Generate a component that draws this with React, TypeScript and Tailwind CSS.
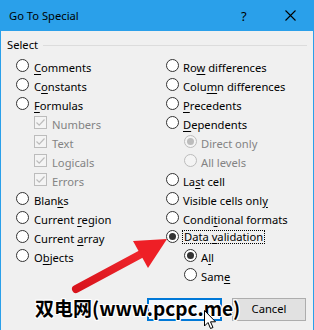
import React from "react";

const FONT = { fontFamily: '"Noto Sans", "Segoe UI", sans-serif' };

function Radio({ checked, disabled }: { checked?: boolean; disabled?: boolean }) {
  return (
    <span
      className={`w-[13px] h-[13px] shrink-0 rounded-full border flex items-center justify-center ${
        disabled ? "border-[#bcbcbc] bg-[#f4f4f4]" : "border-[#333333] bg-white"
      }`}
    >
      {checked && (
        <span className={`w-[7px] h-[7px] rounded-full ${disabled ? "bg-[#bcbcbc]" : "bg-[#333333]"}`} />
      )}
    </span>
  );
}

function Check() {
  return (
    <span className="w-[13px] h-[13px] shrink-0 border border-[#bcbcbc] bg-[#f4f4f4] flex items-center justify-center">
      <svg width="11" height="11" viewBox="0 0 11 11">
        <path d="M1.5 5.5 L4.2 8.2 L9.5 2.5" fill="none" stroke="#bcbcbc" strokeWidth="1.2" />
      </svg>
    </span>
  );
}

function Label({ pre = "", u = "", post = "", disabled }: { pre?: string; u?: string; post?: string; disabled?: boolean }) {
  return (
    <span className={`whitespace-nowrap text-[11.2px] leading-[16px] ${disabled ? "text-[#838383]" : "text-black"}`}>
      {pre}
      {u && <span className="underline underline-offset-2">{u}</span>}
      {post}
    </span>
  );
}

function Row({ children, indent = "" }: { children: React.ReactNode; indent?: string }) {
  return <div className={`h-[19px] flex items-center ${indent}`}>{children}</div>;
}

export default function App() {
  return (
    <div className="w-[314px] h-[330px] overflow-hidden relative bg-[#f0f0f0] border-l border-r border-[#2aa0ea]" style={FONT}>
      {/* Title bar */}
      <div className="h-[31px] bg-[#2aa0ea] flex items-center relative">
        <span className="ml-[8px] mt-[1px] text-[11.2px] text-black">Go To Special</span>
        <span className="absolute left-[240px] top-[7px] text-[13px] text-black">?</span>
        <svg className="absolute left-[284px] top-[10px]" width="11" height="11" viewBox="0 0 11 11">
          <path d="M0.5 0.5 L10.5 10.5 M10.5 0.5 L0.5 10.5" stroke="#000" strokeWidth="1.1" />
        </svg>
      </div>

      {/* Group header */}
      <div className="mt-[6px] h-[16px] flex items-center">
        <span className="ml-[6px] text-[11.2px] leading-[16px] text-black">Select</span>
        <span className="flex-1 ml-[5px] mr-[6px] h-px bg-[#dcdcdc]" />
      </div>

      {/* Options */}
      <div className="mt-[3px] flex items-start">
        <div className="w-[150px] ml-[15px] flex flex-col">
          <Row><Radio /><span className="ml-[5px]"><Label u="C" post="omments" /></span></Row>
          <Row><Radio /><span className="ml-[5px]"><Label pre="C" u="o" post="nstants" /></span></Row>
          <Row><Radio /><span className="ml-[5px]"><Label u="F" post="ormulas" /></span></Row>
          <Row indent="pl-[18px]"><Check /><span className="ml-[5px]"><Label pre="Numbers" disabled /></span></Row>
          <Row indent="pl-[18px]"><Check /><span className="ml-[5px]"><Label pre="Text" disabled /></span></Row>
          <Row indent="pl-[18px]"><Check /><span className="ml-[5px]"><Label pre="Logicals" disabled /></span></Row>
          <Row indent="pl-[18px]"><Check /><span className="ml-[5px]"><Label pre="Errors" disabled /></span></Row>
          <Row><Radio /><span className="ml-[5px]"><Label pre="Blan" u="k" post="s" /></span></Row>
          <Row><Radio /><span className="ml-[5px]"><Label pre="Current " u="r" post="egion" /></span></Row>
          <Row><Radio /><span className="ml-[5px]"><Label pre="Current " u="a" post="rray" /></span></Row>
          <Row><Radio /><span className="ml-[5px]"><Label pre="O" u="b" post="jects" /></span></Row>
        </div>
        <div className="flex flex-col">
          <Row><Radio /><span className="ml-[4px]"><Label pre="Ro" u="w" post=" differences" /></span></Row>
          <Row><Radio /><span className="ml-[4px]"><Label pre="Colu" u="m" post="n differences" /></span></Row>
          <Row><Radio /><span className="ml-[4px]"><Label u="P" post="recedents" /></span></Row>
          <Row><Radio /><span className="ml-[4px]"><Label u="D" post="ependents" /></span></Row>
          <Row indent="pl-[18px]"><Radio checked disabled /><span className="ml-[4px]"><Label pre="Direct only" disabled /></span></Row>
          <Row indent="pl-[18px]"><Radio disabled /><span className="ml-[4px]"><Label pre="All levels" disabled /></span></Row>
          <Row><Radio /><span className="ml-[4px]"><Label pre="La" u="s" post="t cell" /></span></Row>
          <Row><Radio /><span className="ml-[4px]"><Label pre="Visible cells onl" u="y" /></span></Row>
          <Row><Radio /><span className="ml-[4px]"><Label pre="Condi" u="t" post="ional formats" /></span></Row>
          <Row>
            <Radio checked />
            <span className="ml-[3px] px-[1px] border border-dotted border-black h-[14px] flex items-center">
              <Label pre="Data " u="v" post="alidation" />
            </span>
          </Row>
          <Row indent="pl-[18px]"><Radio checked /><span className="ml-[4px]"><Label pre="A" u="l" post="l" /></span></Row>
          <Row indent="pl-[18px]"><Radio /><span className="ml-[4px]"><Label pre="Sam" u="e" /></span></Row>
        </div>
      </div>

      {/* Buttons */}
      <div className="mt-[14px] flex justify-end gap-[10px] pr-[7px]">
        <div className="w-[75px] h-[23px] border-2 border-[#0078d7] bg-[#f4f9fd]" />
        <div className="w-[74px] h-[23px] border border-[#adadad] bg-[#e1e1e1] flex items-center justify-center text-[11.2px] text-black">
          Cancel
        </div>
      </div>

      {/* Red arrow annotation */}
      <svg className="absolute left-0 top-0 pointer-events-none" width="314" height="330" viewBox="0 0 314 330">
        <defs>
          <linearGradient id="ar" x1="0" y1="1" x2="1" y2="0">
            <stop offset="0" stopColor="#d8141c" />
            <stop offset="1" stopColor="#f0262c" />
          </linearGradient>
        </defs>
        <line x1="75" y1="289" x2="142" y2="253" stroke="url(#ar)" strokeWidth="8" strokeLinecap="round" />
        <polygon points="166,239 132,241 147,268" fill="#ee1f26" />
      </svg>

      {/* Watermark */}
      <div
        className="absolute left-[34px] top-[295px] text-[19px] font-bold text-black whitespace-nowrap leading-[26px]"
        style={{
          fontFamily: '"Noto Sans CJK SC", "Noto Sans", sans-serif',
          textShadow: "1px 0 0 #fff, -1px 0 0 #fff, 0 1px 0 #fff, 0 -1px 0 #fff, 1px 1px 0 #fff, -1px -1px 0 #fff, 1px -1px 0 #fff, -1px 1px 0 #fff",
        }}
      >
        双电网(www.pcpc.me)
      </div>

      {/* Mouse cursor */}
      <svg className="absolute left-[203px] top-[310px]" width="13" height="20" viewBox="0 0 13 20">
        <path d="M0.5 0.5 L0.5 16 L4 12.5 L6.5 18.5 L9 17.5 L6.5 11.8 L11.5 11.8 Z" fill="#fff" stroke="#000" strokeWidth="1" />
      </svg>
    </div>
  );
}
